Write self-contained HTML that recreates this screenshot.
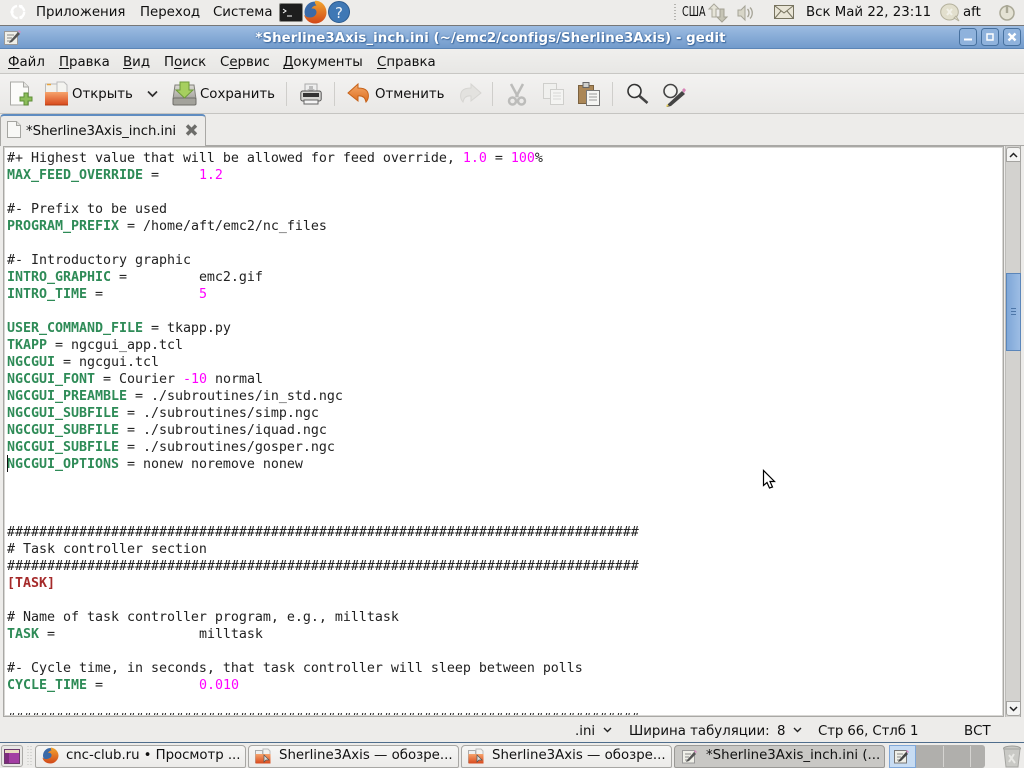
<!DOCTYPE html>
<html><head><meta charset="utf-8"><style>
html,body{margin:0;padding:0;width:1024px;height:768px;overflow:hidden;background:#edecea}
*{box-sizing:border-box}
body{font-family:"DejaVu Sans","Liberation Sans",sans-serif;font-size:13.33px;color:#101010;position:relative}
.a{position:absolute;white-space:pre;line-height:16px;margin-top:2px}
svg{position:absolute;overflow:visible}
u{text-decoration-thickness:1px;text-underline-offset:2px}
#code{position:absolute;left:7px;top:150px;margin:0;font:13.33px/17px "DejaVu Sans Mono","Liberation Mono",monospace;letter-spacing:-.027px;color:#222;white-space:pre;height:565px;width:990px;overflow:hidden}
#code b{color:#2e8b57;font-weight:bold}
#code i{color:#ff00ff;font-style:normal}
#code em{color:#a52a2a;font-style:normal;font-weight:bold}
.sep{position:absolute;top:82px;width:1px;height:24px;background:#cfcecb}
.tb{position:absolute;top:745px;height:23px;border:1px solid #a8a7a4;border-radius:4px 4px 2px 2px;background:linear-gradient(#f6f6f5,#ecebe9)}
</style></head><body>
<svg width="0" height="0" style="left:0;top:0"><defs>
<linearGradient id="ff" x1="0" y1="0" x2="0" y2="1"><stop offset="0" stop-color="#f2a52f"/><stop offset="1" stop-color="#d1481a"/></linearGradient>
<linearGradient id="fold" x1="0" y1="0" x2="0" y2="1"><stop offset="0" stop-color="#f6a36c"/><stop offset="1" stop-color="#d8491c"/></linearGradient>
<linearGradient id="hd" x1="0" y1="0" x2="0" y2="1"><stop offset="0" stop-color="#dcdbd5"/><stop offset="1" stop-color="#8f8e88"/></linearGradient>
<linearGradient id="undo" x1="0" y1="0" x2="0" y2="1"><stop offset="0" stop-color="#f4a868"/><stop offset="1" stop-color="#dd6d1f"/></linearGradient>
</defs></svg>

<!-- top panel -->
<div style="position:absolute;left:0;top:0;width:1024px;height:25px;background:#edecea"></div>
<svg style="left:9px;top:3px" width="18" height="18" viewBox="0 0 18 18"><circle cx="9" cy="9" r="6.200" fill="none" stroke="#fff" stroke-width="2.400" stroke-dasharray="8 2"/><circle cx="3" cy="9" r="1.700" fill="#fff"/><circle cx="12" cy="3.600" r="1.700" fill="#fff"/><circle cx="12" cy="14.400" r="1.700" fill="#fff"/></svg>
<div class="a" style="left:36px;top:3px">Приложения</div>
<div class="a" style="left:140px;top:3px">Переход</div>
<div class="a" style="left:213px;top:3px">Система</div>
<svg style="left:279px;top:3px" width="24" height="19" viewBox="0 0 24 19"><rect x=".5" y=".5" width="23" height="18" rx="1.500" fill="#1d1d1d" stroke="#8a8a86"/><path d="M4 6l3 2-3 2" fill="none" stroke="#fff"/><path d="M8 13h5" stroke="#fff"/></svg>
<svg style="left:303px;top:0" width="24" height="24" viewBox="0 0 24 24"><circle cx="12" cy="12" r="10.500" fill="#3a6aa8"/><path d="M12 .8C18.500 .5 23.500 6 23.500 12.500c0 6-5 11-11.500 11C6.500 23.500 2 19.500 1 14.500c1.500 2 3.500 3 6 3 4 0 6.500-2.500 6.500-5.500 0-2.500-2.500-4-5-3.300C9 7 11 5.500 13.500 5.500 12 4 11.500 2.500 12 .8z" fill="url(#ff)"/></svg>
<svg style="left:328px;top:1px" width="22" height="22" viewBox="0 0 22 22"><circle cx="11" cy="11" r="10.500" fill="#3f78b5" stroke="#2b5a8f"/><text x="11" y="17" text-anchor="middle" font-family="DejaVu Sans" font-size="15" fill="#e8f0f8">?</text></svg>
<svg style="left:674px;top:4px" width="3" height="17"><path d="M1 0v17" stroke="#b5b4b0" stroke-dasharray="1 2" stroke-width="2"/></svg>
<div class="a" style="left:682px;top:3px;transform:scaleX(.72);transform-origin:0 0">США</div>
<svg style="left:707px;top:3px" width="22" height="20" viewBox="0 0 22 20"><path d="M7 1l5 5H9v8H5V6H2z" fill="#e6e4d8" stroke="#aaa89b"/><path d="M15 19l5-5h-3V6h-4v8h-3z" fill="#c6c4b5" stroke="#a3a193"/></svg>
<svg style="left:737px;top:5px" width="18" height="16" viewBox="0 0 18 16"><path d="M1 5h3l4-4v14l-4-4H1z" fill="#d8d6c8" stroke="#a5a396"/><path d="M10.500 4c2 2 2 6 0 8M13 2.500c3 3 3 8 0 11" fill="none" stroke="#a5a396" stroke-width="1.300"/></svg>
<svg style="left:774px;top:5px" width="20" height="14" viewBox="0 0 20 14"><rect x=".5" y=".5" width="19" height="13" fill="#e9e5d6" stroke="#77735f"/><path d="M1 1l9 7 9-7M1 13l6-7M19 13l-6-7" fill="none" stroke="#77735f"/></svg>
<div class="a" style="left:806px;top:3px">Вск Май 22, 23:11</div>
<svg style="left:940px;top:3px" width="20" height="19" viewBox="0 0 20 19"><ellipse cx="9.500" cy="9" rx="8.800" ry="8" fill="#e2dfcd" stroke="#b3b09c"/><path d="M14 15l5 3-3-5z" fill="#e2dfcd" stroke="#b3b09c"/><path d="M7 6l5 6M12 6l-5 6" stroke="#f2f1e8" stroke-width="2"/></svg>
<div class="a" style="left:963px;top:3px">aft</div>
<svg style="left:998px;top:3px" width="18" height="19" viewBox="0 0 18 19"><circle cx="9" cy="10" r="7" fill="#e4e2d4" stroke="#aaa896" stroke-width="1.500"/><path d="M9 2v8" stroke="#aaa896" stroke-width="2.400"/></svg>

<!-- title bar -->
<div style="position:absolute;left:0;top:25px;width:1024px;height:24px;background:linear-gradient(#9dbce2,#729bcc);border-top:1px solid #777;border-bottom:1px solid #5c85b6"></div>
<svg style="left:4px;top:29px" width="17" height="17" viewBox="0 0 17 17"><rect x=".5" y="2.500" width="13" height="13" fill="#efefe8" stroke="#999"/><path d="M3 6h7M3 9h5M3 12h4" stroke="#888"/><path d="M6 12l8-9 2 2-8 8-3 1z" fill="#555"/><path d="M14 2l2 2 1-1-2-2z" fill="#d58ac0"/></svg>
<div class="a" style="left:0;top:29px;width:981px;text-align:center;font-weight:bold;letter-spacing:.07px;color:#fff;text-shadow:0 0 2px #3f6a9f,1px 1px 1px #3f6a9f">*Sherline3Axis_inch.ini (~/emc2/configs/Sherline3Axis) - gedit</div>
<svg style="left:959px;top:28px" width="62" height="18" viewBox="0 0 62 18">
<g fill="#8fb2dc" stroke="#47719f"><rect x=".5" y=".5" width="17" height="17" rx="3"/><rect x="22.500" y=".5" width="17" height="17" rx="3"/><rect x="44.500" y=".5" width="17" height="17" rx="3"/></g>
<path d="M5 11.500h8" stroke="#fff" stroke-width="2"/><rect x="28" y="6" width="6" height="6" fill="none" stroke="#fff" stroke-width="1.500"/><path d="M49.500 5.500l7 7M56.500 5.500l-7 7" stroke="#fff" stroke-width="2.400"/></svg>

<!-- menu -->
<div style="position:absolute;left:0;top:49px;width:1024px;height:25px;background:linear-gradient(#f0efed,#e8e7e5);border-bottom:1px solid #c8c7c4"></div>
<div class="a" style="left:8px;top:53px"><u>Ф</u>айл</div>
<div class="a" style="left:59px;top:53px"><u>П</u>равка</div>
<div class="a" style="left:123px;top:53px"><u>В</u>ид</div>
<div class="a" style="left:164px;top:53px">П<u>о</u>иск</div>
<div class="a" style="left:220px;top:53px">С<u>е</u>рвис</div>
<div class="a" style="left:283px;top:53px"><u>Д</u>окументы</div>
<div class="a" style="left:377px;top:53px"><u>С</u>правка</div>

<!-- toolbar -->
<div style="position:absolute;left:0;top:74px;width:1024px;height:40px;background:linear-gradient(#f3f2f1,#e9e8e6);border-bottom:1px solid #c5c4c1"></div>
<svg style="left:9px;top:81px" width="24" height="26" viewBox="0 0 24 26"><path d="M1.500 1h13l5 5v18h-18z" fill="#fbfbf9" stroke="#a9a9a5"/><path d="M14.500 1v5h5" fill="#e6e6e2" stroke="#a9a9a5"/><path d="M17 13h4v4h4v4h-4v4h-4v-4h-4v-4h4z" transform="translate(-2 -1)" fill="#8cbd5a" stroke="#5e8f38"/></svg>
<svg style="left:44px;top:81px" width="25" height="25" viewBox="0 0 25 25"><path d="M1.500 3h13v20h-13z" fill="#f2f1ec" stroke="#bbb"/><path d="M13 1h7l3 3v8H13z" fill="#f4f4f0" stroke="#bbb"/><path d="M3 3.500h4" stroke="#e8a33c" stroke-width="1.500"/><path d="M1 11h23v13H1z" fill="url(#fold)"/><path d="M1 24h23" stroke="#b23d14"/></svg>
<div class="a" style="left:72px;top:85px">Открыть</div>
<svg style="left:147px;top:90px" width="11" height="8" viewBox="0 0 11 8"><path d="M1 1.500l4.500 4.500 4.500-4.500" fill="none" stroke="#2e2e2e" stroke-width="1.700"/></svg>
<svg style="left:172px;top:81px" width="25" height="25" viewBox="0 0 25 25"><path d="M3 4h19l2 14v5H1v-5z" fill="url(#hd)" stroke="#81807a"/><rect x="1" y="17" width="23" height="7" rx="1.500" fill="#a3a29b" stroke="#6f6e69"/><path d="M8 1h9v8h4l-8.500 8L4 9h4z" fill="#a6cf5f" stroke="#6e9a3a"/></svg>
<div class="a" style="left:200px;top:85px">Сохранить</div>
<div class="sep" style="left:286px"></div>
<svg style="left:300px;top:83px" width="22" height="22" viewBox="0 0 22 22"><path d="M5 1h12v9H5z" fill="#eee" stroke="#aaa"/><path d="M9 3h4v3h2l-4 3-4-3h2z" fill="#bbb"/><rect x=".8" y="8" width="20.400" height="10" rx="2" fill="#d6d6d3" stroke="#555"/><rect x="3" y="10" width="16" height="4" fill="#333"/><rect x="4" y="17" width="14" height="4" fill="#f4f4f4" stroke="#666"/></svg>
<div class="sep" style="left:334px"></div>
<svg style="left:347px;top:83px" width="23" height="22" viewBox="0 0 23 22"><path d="M11 1L1 10l10 8v-5c4-.5 7 1 8 6 3-3 3-8 1-11-2-2.500-5-3-9-3z" fill="url(#undo)" stroke="#c66219"/></svg>
<div class="a" style="left:375px;top:85px">Отменить</div>
<svg style="left:459px;top:83px" width="22" height="22" viewBox="0 0 22 22"><path d="M12 1l10 9-10 8v-5c-4-.5-7 1-8 6-3-3-3-8-1-11 2-2.500 5-3 9-3z" fill="#e3e2df" stroke="#d6d5d2"/></svg>
<div class="sep" style="left:492px"></div>
<svg style="left:508px;top:83px" width="18" height="23" viewBox="0 0 18 23"><path d="M3 1l7 13M15 1L8 14" stroke="#bcbcba" stroke-width="2.500"/><circle cx="4.500" cy="18" r="3.500" fill="none" stroke="#bcbcba" stroke-width="2.500"/><circle cx="13.500" cy="18" r="3.500" fill="none" stroke="#bcbcba" stroke-width="2.500"/></svg>
<svg style="left:543px;top:83px" width="21" height="22" viewBox="0 0 21 22"><rect x=".5" y=".5" width="13" height="15" fill="#f0f0ee" stroke="#cfcfcc"/><rect x="7.500" y="6.500" width="13" height="15" fill="#f4f4f2" stroke="#cfcfcc"/><path d="M10 10h8M10 13h8M10 16h8" stroke="#d8d8d5"/></svg>
<svg style="left:578px;top:82px" width="22" height="24" viewBox="0 0 22 24"><rect x=".5" y="3.500" width="15" height="18" fill="#ab8757" stroke="#7b6240"/><rect x="5" y=".5" width="6" height="5" fill="#cfcfcc" stroke="#666"/><rect x="8.500" y="8.500" width="13" height="15" fill="#f5f5f3" stroke="#777"/><path d="M11 12h8M11 15h8M11 18h8" stroke="#999"/></svg>
<div class="sep" style="left:612px"></div>
<svg style="left:626px;top:83px" width="23" height="22" viewBox="0 0 23 22"><circle cx="8.500" cy="8" r="6.500" fill="#f3f3f1" stroke="#333" stroke-width="1.600"/><path d="M13.500 13l8 7" stroke="#444" stroke-width="2.600"/></svg>
<svg style="left:662px;top:83px" width="24" height="24" viewBox="0 0 24 24"><circle cx="8.500" cy="8" r="6.500" fill="#f3f3f1" stroke="#444" stroke-width="1.600"/><path d="M6 21l14-13 3 3-14 12-4 1z" fill="#444"/><path d="M20 7l2-2 2 2-2 3z" fill="#d884b8"/><path d="M5 21l-1 3 3-1z" fill="#e8cf5a"/></svg>

<!-- tab -->
<div style="position:absolute;left:0;top:114px;width:1024px;height:32px;background:#edecea"></div>
<div style="position:absolute;left:0;top:114px;width:206px;height:32px;background:#edecea;border:1px solid #a9a8a5;border-top:2px solid #5f8cc0;border-bottom:none;border-radius:4px 4px 0 0"></div>
<svg style="left:7px;top:121px" width="14" height="17" viewBox="0 0 14 17"><path d="M.5.5h9l4 4v12H.5z" fill="#f8f8f6" stroke="#a5a5a1"/><path d="M9.500.5v4h4" fill="#e0e0dc" stroke="#a5a5a1"/></svg>
<div class="a" style="left:26px;top:122px;letter-spacing:-.09px">*Sherline3Axis_inch.ini</div>
<svg style="left:185px;top:124px" width="13" height="12" viewBox="0 0 13 12"><path d="M2 1.500l9 9M11 1.500l-9 9" stroke="#6d6d6a" stroke-width="3.400"/></svg>
<div style="position:absolute;left:206px;top:145px;width:818px;height:1px;background:#a9a8a5"></div>

<!-- editor -->
<div style="position:absolute;left:3px;top:146px;width:1001px;height:571px;background:#fff;border:1px solid #a9a8a5;box-shadow:inset 0 0 0 1px #d8d7d4"></div>
<pre id="code">#+ Highest value that will be allowed for feed override, <i>1.0</i> = <i>100</i>%
<b>MAX_FEED_OVERRIDE</b> =     <i>1.2</i>

#- Prefix to be used
<b>PROGRAM_PREFIX</b> = /home/aft/emc2/nc_files

#- Introductory graphic
<b>INTRO_GRAPHIC</b> =         emc2.gif
<b>INTRO_TIME</b> =            <i>5</i>

<b>USER_COMMAND_FILE</b> = tkapp.py
<b>TKAPP</b> = ngcgui_app.tcl
<b>NGCGUI</b> = ngcgui.tcl
<b>NGCGUI_FONT</b> = Courier <i>-10</i> normal
<b>NGCGUI_PREAMBLE</b> = ./subroutines/in_std.ngc
<b>NGCGUI_SUBFILE</b> = ./subroutines/simp.ngc
<b>NGCGUI_SUBFILE</b> = ./subroutines/iquad.ngc
<b>NGCGUI_SUBFILE</b> = ./subroutines/gosper.ngc
<b>NGCGUI_OPTIONS</b> = nonew noremove nonew



###############################################################################
# Task controller section
###############################################################################
<em>[TASK]</em>

# Name of task controller program, e.g., milltask
<b>TASK</b> =                  milltask

#- Cycle time, in seconds, that task controller will sleep between polls
<b>CYCLE_TIME</b> =            <i>0.010</i>

###############################################################################</pre>
<div style="position:absolute;left:7px;top:455px;width:1px;height:17px;background:#111"></div>

<!-- scrollbar -->
<div style="position:absolute;left:1005px;top:146px;width:16px;height:571px;background:#d3d2cf;border-right:1px solid #a9a8a5;border-left:1px solid #bdbcb9"></div>
<div style="position:absolute;left:1006px;top:147px;width:15px;height:15px;background:#f4f4f3;border:1px solid #a4a3a0;border-radius:3px 3px 0 0"></div>
<svg style="left:1009px;top:152px" width="9" height="6"><path d="M1 5l3.500-3.500L8 5" fill="none" stroke="#222" stroke-width="1.500"/></svg>
<div style="position:absolute;left:1006px;top:273px;width:15px;height:78px;background:linear-gradient(90deg,#7fa7d8,#9dbde4);border:1px solid #5b86ba"></div>
<svg style="left:1010px;top:307px" width="7" height="10"><path d="M1 1.500h5M1 4.500h5M1 7.500h5" stroke="#4d76a8"/></svg>
<div style="position:absolute;left:1006px;top:701px;width:15px;height:15px;background:#f4f4f3;border:1px solid #a4a3a0;border-radius:0 0 3px 3px"></div>
<svg style="left:1009px;top:706px" width="9" height="6"><path d="M1 1l3.500 3.500L8 1" fill="none" stroke="#222" stroke-width="1.500"/></svg>

<!-- status bar -->
<div class="a" style="left:575px;top:722px">.ini</div>
<svg style="left:603px;top:727px" width="9" height="6"><path d="M1 1l3.500 3.500L8 1" fill="none" stroke="#222" stroke-width="1.400"/></svg>
<div class="a" style="left:629px;top:722px">Ширина табуляции:</div>
<div class="a" style="left:777px;top:722px">8</div>
<svg style="left:793px;top:727px" width="9" height="6"><path d="M1 1l3.500 3.500L8 1" fill="none" stroke="#222" stroke-width="1.400"/></svg>
<div class="a" style="left:818px;top:722px;letter-spacing:-.1px">Стр 66, Стлб 1</div>
<div class="a" style="left:964px;top:722px">ВСТ</div>

<!-- bottom panel -->
<div style="position:absolute;left:0;top:742px;width:1024px;height:26px;background:#edecea;border-top:1px solid #4f6d8c"></div>
<div style="position:absolute;left:1px;top:745px;width:22px;height:22px;border:1px solid #aaa9a6;border-radius:3px;background:#e8e7e5"></div>
<svg style="left:4px;top:749px" width="16" height="15" viewBox="0 0 16 15"><rect x=".5" y=".5" width="15" height="14" fill="#a33ea3" stroke="#6c3a6c"/><rect x="1" y="1" width="14" height="3" fill="#e8dcc0"/><rect x="1" y="4" width="4" height="10" fill="#7d2c7d"/></svg>
<svg style="left:27px;top:746px" width="5" height="20"><path d="M1 0v20M4 0v20" stroke="#c0bfbc" stroke-dasharray="1 2"/></svg>

<div class="tb" style="left:35px;width:211px"></div>
<svg style="left:42px;top:747px" width="17" height="17" viewBox="0 0 17 17"><circle cx="8.500" cy="8.500" r="7.500" fill="#3a6aa8"/><path d="M8 .5c5 0 8.500 4 8.500 8S13 16.500 8.500 16.500C4 16.500 1 14 .5 10.500c1 1 3 2 4.500 1.500 3-.5 5-2 4.500-4.500-.5-1.500-2-2-3.500-1.500.5-1.500 2-2.500 3.500-2.500-.8-1-.8-2-.5-3z" fill="url(#ff)"/></svg>
<div class="a" style="left:66px;top:746px;letter-spacing:-.05px">cnc-club.ru • Просмотр ...</div>

<div class="tb" style="left:248px;width:211px"></div>
<svg style="left:255px;top:748px" width="16" height="16" viewBox="0 0 16 16"><path d="M.5 2.500h7v12H.5z" fill="#eee" stroke="#aaa"/><path d="M8 1h5l2 2v5H8z" fill="#f2f2f0" stroke="#bbb"/><rect x=".5" y="6" width="15" height="9.500" fill="url(#fold)"/><path d="M9 7v7l2-2h3z" fill="#ddd" stroke="#555" stroke-width=".7"/></svg>
<div class="a" style="left:279px;top:746px">Sherline3Axis — обозре...</div>

<div class="tb" style="left:461px;width:211px"></div>
<svg style="left:468px;top:748px" width="16" height="16" viewBox="0 0 16 16"><path d="M.5 2.500h7v12H.5z" fill="#eee" stroke="#aaa"/><path d="M8 1h5l2 2v5H8z" fill="#f2f2f0" stroke="#bbb"/><rect x=".5" y="6" width="15" height="9.500" fill="url(#fold)"/><path d="M9 7v7l2-2h3z" fill="#ddd" stroke="#555" stroke-width=".7"/></svg>
<div class="a" style="left:492px;top:746px">Sherline3Axis — обозре...</div>

<div class="tb" style="left:674px;width:211px;background:#c9c8c5;border-color:#9a9996"></div>
<svg style="left:682px;top:748px" width="16" height="16" viewBox="0 0 16 16"><rect x=".5" y="2.500" width="12" height="12.500" fill="#efefe8" stroke="#999"/><path d="M3 6h6M3 9h4M3 12h3" stroke="#888"/><path d="M5 12l7-8 2 2-7 7-3 1z" fill="#555"/><path d="M12 3l2 2 1-1-2-2z" fill="#d58ac0"/></svg>
<div class="a" style="left:706px;top:746px">*Sherline3Axis_inch.ini (...</div>

<div style="position:absolute;left:889px;top:745px;width:96px;height:23px;background:#b0afac;border-radius:3px"></div>
<div style="position:absolute;left:889px;top:745px;width:27px;height:23px;background:#c7dcf3;border:1px solid #7fa7d8"></div>
<div style="position:absolute;left:943px;top:746px;width:1px;height:21px;background:#d5d4d1"></div>
<div style="position:absolute;left:970px;top:746px;width:1px;height:21px;background:#d5d4d1"></div>
<svg style="left:894px;top:748px" width="16" height="16" viewBox="0 0 16 16"><rect x=".5" y="2.500" width="12" height="12.500" fill="#efefe8" stroke="#777"/><path d="M3 6h6M3 9h4M3 12h3" stroke="#888"/><path d="M5 12l7-8 2 2-7 7-3 1z" fill="#444"/><path d="M12 3l2 2 1-1-2-2z" fill="#d58ac0"/></svg>
<svg style="left:1002px;top:745px" width="20" height="23" viewBox="0 0 20 23"><ellipse cx="10" cy="3.500" rx="8.500" ry="2.500" fill="#c8c8c4" stroke="#9c9c98"/><path d="M2 4l2 18h12l2-18z" fill="#c9c9c5" stroke="#a5a5a1"/><path d="M7 10l6 8M12 9l-5 8" stroke="#e8e8e4" stroke-width="2"/></svg>

<!-- cursor -->
<svg style="left:762px;top:469px" width="15" height="21" viewBox="0 0 15 21"><path d="M1.500 1.500v15l3.500-3 2.500 5.500 3-1-2.500-5.500h4.500z" fill="#fff" stroke="#000" stroke-width="1.200"/></svg>
</body></html>
